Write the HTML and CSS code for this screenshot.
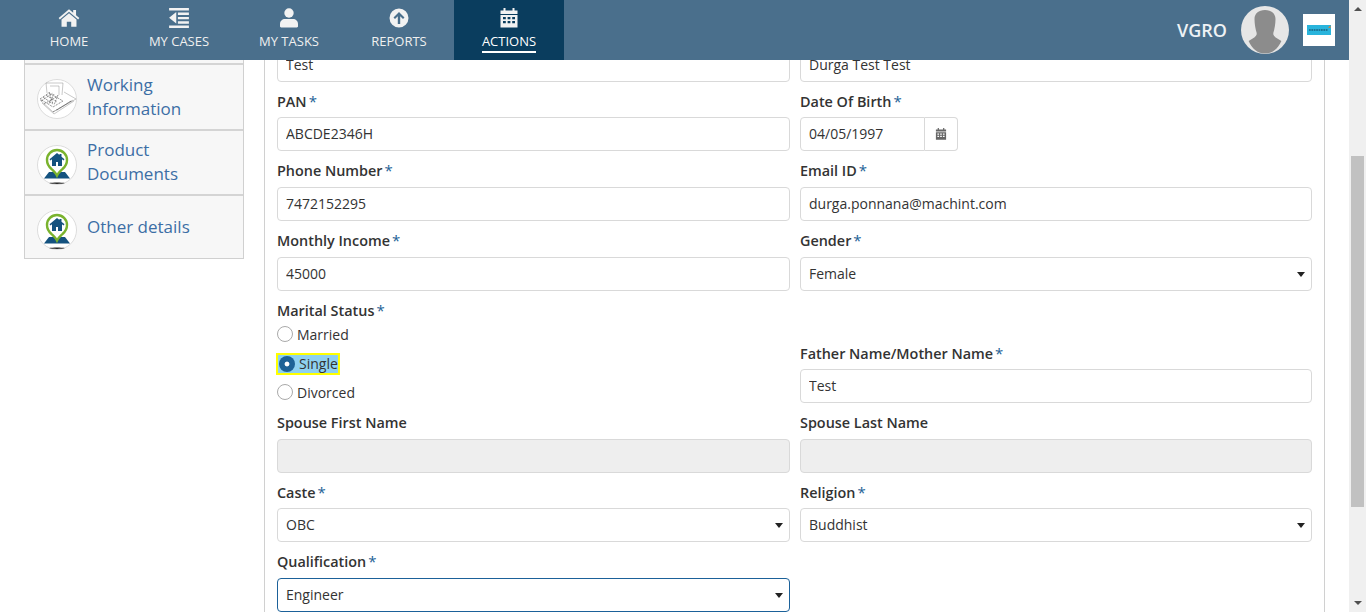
FILE: index.html
```html
<!DOCTYPE html>
<html lang="en">
<head>
<meta charset="utf-8">
<title>Actions</title>
<link rel="stylesheet" href="styles.css">
</head>
<body>
<header class="topbar">
  <nav class="nav">
    <a class="nav-item"><svg class="nav-icon" viewBox="0 0 20 18"><path d="M10 1 0.6 9l1.1 1.3L10 3.300l8.300 7 1.100-1.300-3-2.500V1.800h-2.600v2.500z"/><path d="M10 4.700 3.200 10.400V17h4.800v-4.700h4V17h4.800v-6.600z"/></svg><span class="nav-label">HOME</span></a>
    <a class="nav-item"><svg class="nav-icon" viewBox="0 0 20 18"><path d="M1 0h18v2.200H1zM9 4h10v2.200H9zM9 8h10v2.200H9zM9 12h10v2.200H9zM1 15.800h18V18H1zM7.500 3.500v10.500L1 8.700z"/></svg><span class="nav-label">MY CASES</span></a>
    <a class="nav-item"><svg class="nav-icon" viewBox="0 0 20 20"><circle cx="10" cy="5" r="4.700"/><path d="M2.200 19.500c-.7 0-1.200-.5-1.200-1.200v-2.300C1 13 3.300 11 6 11h8c2.700 0 5 2 5 5v2.300c0 .7-.5 1.200-1.200 1.200z"/></svg><span class="nav-label">MY TASKS</span></a>
    <a class="nav-item"><svg class="nav-icon" viewBox="0 0 20 20"><path fill-rule="evenodd" d="M10 .5a9.500 9.500 0 1 0 0 19 9.500 9.500 0 0 0 0-19zM10 4l5.500 5.500-1.500 1.500-2.800-2.800V16H8.800V8.200L6 11 4.500 9.500z"/></svg><span class="nav-label">REPORTS</span></a>
    <a class="nav-item active"><svg class="nav-icon" viewBox="0 0 20 20"><path fill-rule="evenodd" d="M4.500 0h2v2.500h7V0h2v2.500h3V6h-17V2.500h3zM1.500 7h17v12.500h-17zM4 9v2.200h2.800V9zm4.600 0v2.200h2.800V9zm4.600 0v2.200H16V9zM4 13v2.200h2.800V13zm4.600 0v2.200h2.800V13zm4.600 0v2.200H16V13z"/></svg><span class="nav-label">ACTIONS</span></a>
  </nav>
  <div class="account">
    <span class="account-name">VGRO</span>
    <svg class="avatar" viewBox="0 0 48 48"><circle cx="24" cy="24" r="24" fill="#e6e6e6"/><path d="M24 4c-6.500 0-10.500 3.800-10.500 9 0 5 1 10.500 2.200 14 .4 2-1 3.800-4 5.500L7.600 35C11 43 17 47.500 24 47.500S37 43 40.400 35l-4.100-2.500c-3-1.700-4.400-3.500-4-5.500 1.200-3.500 2.200-9 2.200-14 0-5.200-4-9-10.500-9z" fill="#8c8c8c"/></svg>
    <div class="brand"><svg class="brand-mark" viewBox="0 0 24 10"><rect width="24" height="10" fill="#29b4dc"/><path d="M21 2.500 23.500 0.500V3z" fill="#e8792b"/><path d="M2 5h19" stroke="#17607f" stroke-width="1.600" stroke-dasharray="1.700 .7"/></svg></div>
  </div>
</header>

<div class="page">
  <main class="content">
    <aside class="side">
      <div class="side-item side-prev"></div>
      <a class="side-item">
        <svg class="side-icon" viewBox="0 0 40 40"><circle cx="20" cy="20" r="19.500" fill="#fff" stroke="#dcdcdc"/><g fill="none" stroke="#777" stroke-width=".4"><path d="M9 4h17l-1 12M9 4l1 10M13 7h9v9M3 21l13 12 23-13-12-7M5 24l12 11 20-13"/></g><g fill="none" stroke="#333" stroke-width=".7" stroke-dasharray=".9 .9"><path d="M3 20l9-6 14 8-10 6zM6 18l10 7M9 16l11 7M12 13l4 12M17 15l-5 10M21 16l-4 10M4 22l12-8M7 25l14-8M20 31l14-9M16 33l20-12"/></g></svg>
        <span class="side-text">Working Information</span>
      </a>
      <a class="side-item">
        <svg class="side-icon" viewBox="0 0 40 40"><use href="#pin"/></svg>
        <span class="side-text">Product Documents</span>
      </a>
      <a class="side-item side-last">
        <svg class="side-icon" viewBox="0 0 40 40">
          <defs><g id="pin">
            <circle cx="20" cy="20" r="19.500" fill="#fff" stroke="#dcdcdc"/>
            <path d="M12 27h16l5 6.500H7z" fill="#14527f"/>
            <path d="M20 30.500c-1.500-3-3.500-4.500-5.500-6.500C11.500 21.500 10 18.500 10 15a10 10 0 0 1 20 0c0 3.500-1.500 6.500-4.500 9-2 2-4 3.500-5.500 6.500z" fill="#fff" stroke="#7ab32e" stroke-width="2.400"/>
            <path d="M20 8l-7.500 6.200 1 1.200 1.500-1.200V21h4v-4h2v4h4v-6.800l1.500 1.200 1-1.200-3-2.500V9h-2v1z" fill="#14527f"/>
            <path d="M12 38c4-.8 12-.8 16 0-4 1.200-12 1.200-16 0z" fill="#222"/>
          </g></defs>
          <use href="#pin"/>
        </svg>
        <span class="side-text">Other details</span>
      </a>
    </aside>

    <section class="panel">
      <form class="form">
        <div class="field">
          <input class="input" type="text" value="Test">
        </div>
        <div class="field">
          <input class="input" type="text" value="Durga Test Test">
        </div>

        <div class="field">
          <label class="label">PAN<span class="req">*</span></label>
          <input class="input" type="text" value="ABCDE2346H">
        </div>
        <div class="field">
          <label class="label">Date Of Birth<span class="req">*</span></label>
          <div class="date">
            <input class="input date-input" type="text" value="04/05/1997">
            <span class="date-btn"><svg class="cal" viewBox="0 0 20 20"><path fill-rule="evenodd" d="M4.500 0h2v2.500h7V0h2v2.500h3V6h-17V2.500h3zM1.500 7h17v12.500h-17zM4 9v2.200h2.800V9zm4.600 0v2.200h2.800V9zm4.600 0v2.200H16V9zM4 13v2.200h2.800V13zm4.600 0v2.200h2.800V13zm4.600 0v2.200H16V13z"/></svg></span>
          </div>
        </div>

        <div class="field">
          <label class="label">Phone Number<span class="req">*</span></label>
          <input class="input" type="text" value="7472152295">
        </div>
        <div class="field">
          <label class="label">Email ID<span class="req">*</span></label>
          <input class="input" type="text" value="durga.ponnana@machint.com">
        </div>

        <div class="field">
          <label class="label">Monthly Income<span class="req">*</span></label>
          <input class="input" type="text" value="45000">
        </div>
        <div class="field">
          <label class="label">Gender<span class="req">*</span></label>
          <div class="select">Female</div>
        </div>

        <div class="field">
          <label class="label label-radio">Marital Status<span class="req">*</span></label>
          <div class="radios">
            <div class="radio"><span class="dot"></span>Married</div>
            <div class="radio radio-on"><span class="dot dot-on"></span>Single</div>
            <div class="radio"><span class="dot"></span>Divorced</div>
          </div>
        </div>
        <div class="field">
          <label class="label label-parent">Father Name/Mother Name<span class="req">*</span></label>
          <input class="input" type="text" value="Test">
        </div>

        <div class="field">
          <label class="label">Spouse First Name</label>
          <input class="input input-off" type="text" disabled>
        </div>
        <div class="field">
          <label class="label">Spouse Last Name</label>
          <input class="input input-off" type="text" disabled>
        </div>

        <div class="field">
          <label class="label">Caste<span class="req">*</span></label>
          <div class="select">OBC</div>
        </div>
        <div class="field">
          <label class="label">Religion<span class="req">*</span></label>
          <div class="select">Buddhist</div>
        </div>

        <div class="field">
          <label class="label">Qualification<span class="req">*</span></label>
          <div class="select select-focus">Engineer</div>
        </div>
      </form>
    </section>
  </main>
  <div class="scrollbar">
    <span class="arrow"></span>
    <span class="thumb"></span>
    <span class="arrow arrow-down"></span>
  </div>
</div>
</body>
</html>
```
FILE: styles.css
```css
* { box-sizing: border-box; }
html, body { margin: 0; height: 612px; overflow: hidden; }
body { font-family: "Open Sans", "Noto Sans", sans-serif; font-size: 14px; color: #333; background: #fff; }

.topbar { position: fixed; top: 0; left: 0; width: 1349px; height: 60px; background: #4a6f8c; display: flex; justify-content: space-between; z-index: 5; }
.nav { display: flex; padding-left: 14px; }
.nav-item { width: 110px; height: 60px; display: flex; flex-direction: column; align-items: center; padding-top: 8px; color: #fff; }
.nav-item.active { background: #0a3d5e; }
.nav-icon { width: 22px; height: 20px; fill: #f2f2f2; display: block; }
.nav-label { font-size: 13px; line-height: 17px; margin-top: 5px; padding-bottom: 1px; color: #f0f0f0; border-bottom: 2px solid transparent; }
.active .nav-label { border-bottom-color: #fff; color: #fff; }
.account { display: flex; align-items: center; padding-right: 14px; }
.account-name { font-size: 18px; font-weight: 600; color: #eef2f5; margin-right: 14px; }
.avatar { width: 48px; height: 48px; margin-right: 14px; }
.brand { width: 32px; height: 32px; background: #fff; display: flex; align-items: center; justify-content: center; }
.brand-mark { width: 24px; height: 10px; display: block; }

.page { display: flex; height: 612px; }
.content { width: 1349px; display: flex; align-items: flex-start; padding-left: 24px; }
.scrollbar { width: 17px; height: 612px; background: #f0f0f0; position: relative; display: flex; flex-direction: column; align-items: center; justify-content: space-between; padding: 7px 0; }
.arrow { border: 4px solid transparent; border-top: 0; border-bottom: 4px solid #505050; width: 0; height: 0; }
.arrow-down { border-bottom: 0; border-top: 4px solid #505050; }
.thumb { position: absolute; left: 2px; top: 156px; height: 351px; width: 13px; background: #c1c1c1; }

.side { width: 220px; margin-right: 20px; border: 1px solid #d0d0d0; border-top: 0; background: #f7f7f7; }
.side-item { height: 65.500px; display: flex; align-items: center; padding-left: 12px; border-bottom: 2px solid #d4d4d4; color: #3c6ea5; }
.side-prev { height: 65px; }
.side-last { height: 62px; border-bottom: 0; }
.side-icon { width: 40px; height: 40px; flex: none; margin: 5px 10px 0 0; }
.side-text { font-size: 17px; line-height: 24px; width: 130px; }
.side-last .side-text { width: auto; }

.panel { width: 1061px; height: 612px; border-left: 1px solid #d0d0d0; border-right: 1px solid #d0d0d0; padding: 47.500px 12px 0; }
.form { display: grid; grid-template-columns: 513px 512px; column-gap: 10px; align-items: end; }
.field { display: flex; flex-direction: column; min-width: 0; }
.label { font-weight: 600; font-size: 14.400px; line-height: 19px; color: #333; margin: 10.200px 0 6.550px; }
.label-parent { margin-bottom: 6px; }
.req { color: #1d6296; font-size: 15px; margin-left: 2px; font-weight: 400; }
.input { display: block; width: 100%; height: 34px; border: 1px solid #d9d9d9; border-radius: 4px; padding: 0 8px 1px; font: 14px "Open Sans", sans-serif; color: #333; background: #fff; outline: 0; }
.input-off { background: #eeeeee; }
.date { display: flex; width: 158px; }
.date-input { width: 125px; border-radius: 4px 0 0 4px; }
.date-btn { width: 33px; height: 34px; border: 1px solid #d9d9d9; border-left: 0; border-radius: 0 4px 4px 0; display: flex; align-items: center; justify-content: center; }
.cal { width: 12px; height: 12px; fill: #666; }
.select { height: 34px; border: 1px solid #d9d9d9; border-radius: 4px; padding: 0 8px; line-height: 32px; color: #333; position: relative; }
.select::after { content: ""; position: absolute; right: 6px; top: 14px; border: 4.500px solid transparent; border-top: 5px solid #222; border-bottom: 0; }
.select-focus { border-color: #1b6199; }
.label-radio { margin-bottom: 5px; }
.radios { display: flex; flex-direction: column; gap: 10px; padding-bottom: .9px; }
.radio { display: flex; align-items: center; height: 19px; color: #333; width: max-content; }
.dot { width: 16px; height: 16px; border: 1px solid #aaa; border-radius: 50%; margin-right: 4px; background: #fff; }
.radio-on { height: 18px; margin: 1px 0 0 1px; background: #8ed1f0; outline: 2px solid #ffff00; padding: 0 0 0 1px; }
.dot-on { border: 0; background: radial-gradient(circle, #fff 2px, #1d6296 2.800px); }
```
